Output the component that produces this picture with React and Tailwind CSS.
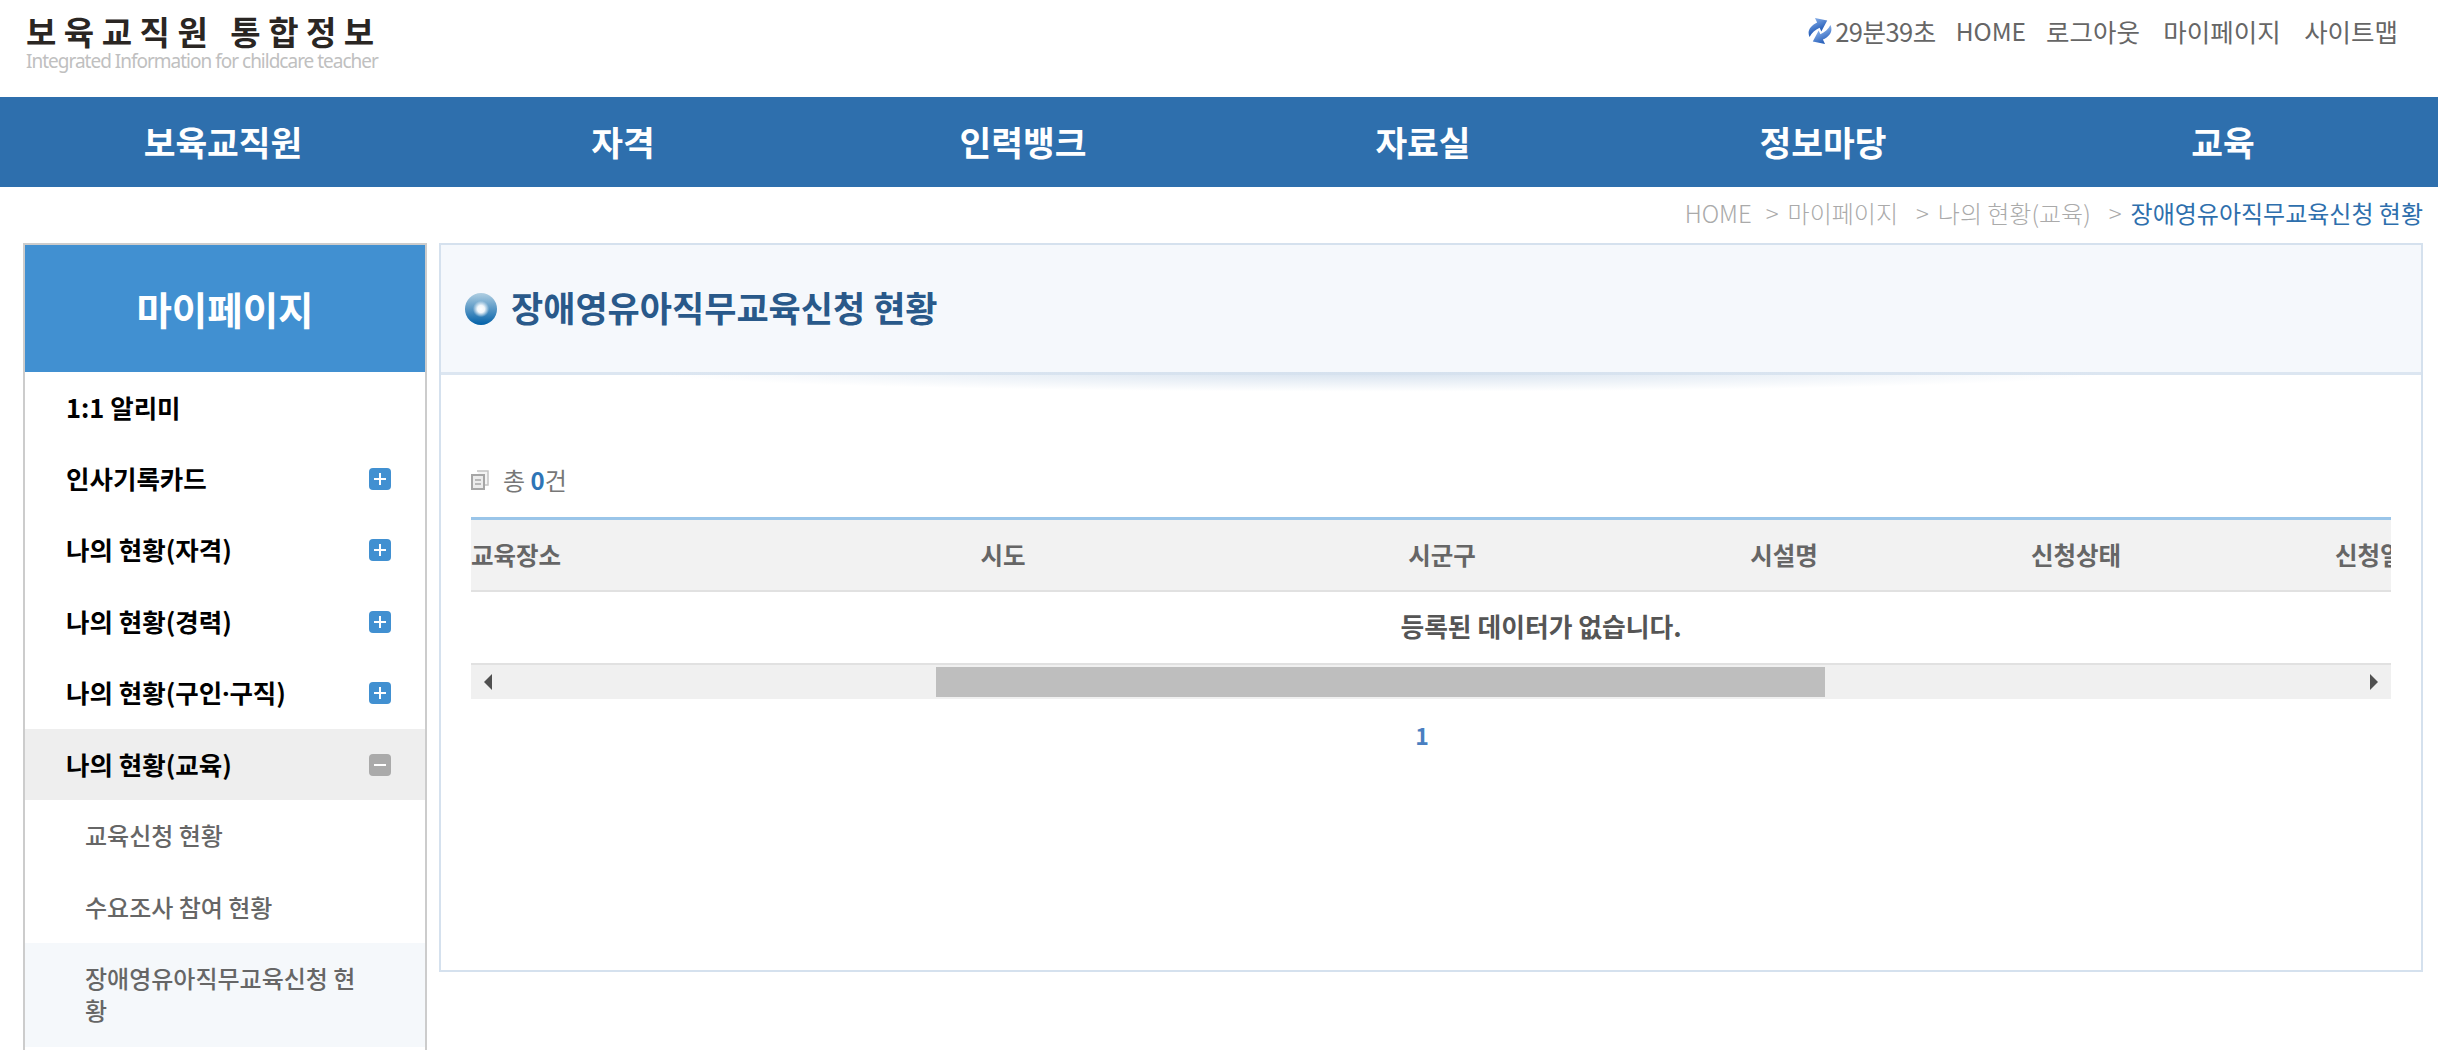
const navItems = ['보육교직원', '자격', '인력뱅크', '자료실', '정보마당', '교육'];

const sideItems = [
  { id: 'alarm', label: '1:1 알리미' },
  { id: 'card', label: '인사기록카드', icon: 'plus' },
  { id: 'cert', label: '나의 현황(자격)', icon: 'plus' },
  { id: 'career', label: '나의 현황(경력)', icon: 'plus' },
  {
    id: 'job',
    label: (
      <>
        나의 현황(구인<span className='font-["Noto_Sans",sans-serif]'>·</span>구직)
      </>
    ),
    icon: 'plus',
  },
  { id: 'edu', label: '나의 현황(교육)', icon: 'minus', open: true },
];

const columns = [
  { label: '교육장소', width: 'w-[476px]' },
  { label: '시도', width: 'w-[498px]' },
  { label: '시군구', width: 'w-[380px]' },
  { label: '시설명', width: 'w-[304px]' },
  { label: '신청상태', width: 'w-[280px]' },
  { label: '신청일자', width: 'w-[328px]' },
];

function RefreshIcon() {
  return (
    <svg width="26" height="28" viewBox="0 0 26 28" className="shrink-0">
      <defs>
        <linearGradient id="swirl" x1="0" y1="0" x2="0" y2="1">
          <stop offset="0" stopColor="#86aee8" />
          <stop offset="1" stopColor="#1c56b4" />
        </linearGradient>
      </defs>
      <g transform="rotate(-25 13 14)">
        <path d="M1 15C1 8 7 5 14 5V0l10 7.5L14 15v-4C9 11 5 12 1 15z" fill="url(#swirl)" />
        <path d="M25 13c0 7-6 10-13 10v5L2 20.500 12 13v4c5 0 9-1 13-4z" fill="url(#swirl)" />
      </g>
    </svg>
  );
}

function DocIcon() {
  return (
    <svg width="18" height="20" viewBox="0 0 18 20" className="shrink-0">
      <path d="M6 1h11v14h-3" fill="#f4f4f4" stroke="#c4c4c4" strokeWidth="1.5" />
      <rect x="1" y="5" width="12" height="14" fill="#ececec" stroke="#a6a6a6" strokeWidth="2" />
      <path d="M4 10h6M4 14h6" stroke="#a6a6a6" strokeWidth="1.500" />
    </svg>
  );
}

function ToggleIcon({ type }) {
  const bg = type === 'plus' ? 'bg-[#4190d1]' : 'bg-[#aaaaaa]';
  return (
    <span className={`relative flex h-[22px] w-[22px] items-center justify-center rounded-[4px] ${bg}`}>
      <span className="h-[2px] w-[12px] bg-white" />
      {type === 'plus' && <span className="absolute h-[12px] w-[2px] bg-white" />}
    </span>
  );
}

function Sidebar() {
  return (
    <aside className="h-[900px] w-[404px] shrink-0 border-2 border-[#cccccc] bg-white">
      <div className="flex h-[127px] items-center justify-center bg-[#4190d1] text-[38.5px] font-semibold text-white">
        마이페이지
      </div>
      {sideItems.map((item) => (
        <div
          key={item.id}
          className={`flex h-[71.4px] items-center justify-between pl-[41px] pr-[34px] text-[25.5px] font-bold text-black ${item.open ? 'bg-[#eeeeee]' : ''}`}
        >
          <span className="-mt-[2px]">{item.label}</span>
          {item.icon && <ToggleIcon type={item.icon} />}
        </div>
      ))}
      <div className="flex h-[71.5px] items-center pb-[2px] pl-[60px] text-[24px] font-medium text-[#666666]">교육신청 현황</div>
      <div className="flex h-[71.5px] items-center pb-[2px] pl-[60px] text-[24px] font-medium text-[#666666]">수요조사 참여 현황</div>
      <div className="flex h-[104px] items-center bg-[#f5f8fb] pb-[2px] pl-[60px] pr-[50px] text-[24px] font-medium leading-[32px] text-[#666666]">
        장애영유아직무교육신청 현황
      </div>
    </aside>
  );
}

function DataTable() {
  return (
    <div className="overflow-hidden border-t-[3px] border-[#9ac5e9]">
      <div className="-ml-[193px] w-[2526px]">
        <div className="flex h-[72px] items-center border-b-2 border-[#e1e1e1] bg-[#f2f2f2] text-[24.5px] font-bold text-[#666666]">
          {columns.map((col) => (
            <div key={col.label} className={`${col.width} shrink-0 text-center`}>
              {col.label}
            </div>
          ))}
        </div>
        <div className="flex h-[73px] items-center justify-center border-b-2 border-[#e1e1e1] pb-[2px] text-[25.8px] font-bold text-[#555555]">
          등록된 데이터가 없습니다.
        </div>
      </div>
    </div>
  );
}

function ScrollBar() {
  return (
    <div className="flex h-[34px] items-center bg-[#f0f0f0] pl-[13px] pr-[13px]">
      <span className="h-0 w-0 border-y-[8px] border-r-[8px] border-y-transparent border-r-[#505050]" />
      <div className="ml-[444px] mr-[545px] h-[30px] flex-1 bg-[#bebebe]" />
      <span className="h-0 w-0 border-y-[8px] border-l-[8px] border-y-transparent border-l-[#505050]" />
    </div>
  );
}

export default function App() {
  return (
    <div className='h-screen overflow-hidden bg-white font-["Noto_Sans_CJK_KR",sans-serif]'>
      {/* top bar */}
      <header className="flex h-[97px] justify-between pl-[26px] pr-[40px]">
        <div className="pt-[12px]">
          <div className="text-[33px] font-bold leading-[38px] tracking-[7.5px] text-[#2a2623]">보육교직원 통합정보</div>
          <div className='font-["Noto_Sans",sans-serif] text-[19px] leading-[22px] tracking-[-1px] text-[#c0c0c0]'>
            Integrated Information for childcare teacher
          </div>
        </div>
        <div className="flex h-[62px] items-center text-[25.5px] text-[#666666]">
          <RefreshIcon />
          <span className="ml-[2px] mr-[20px] tracking-[-0.5px]">29분39초</span>
          <span className="mr-[20px] text-[24.5px]">HOME</span>
          <span className="mr-[23.5px]">로그아웃</span>
          <span className="mr-[23.5px]">마이페이지</span>
          <span>사이트맵</span>
        </div>
      </header>

      {/* main nav */}
      <nav className="grid h-[90px] grid-cols-6 items-center bg-[#2e6fad] pl-[23px] pr-[15px] text-[34.5px] font-bold text-white">
        {navItems.map((item) => (
          <div key={item} className="text-center">
            {item}
          </div>
        ))}
      </nav>

      {/* breadcrumb */}
      <div className="flex h-[56px] items-center justify-end gap-[18px] pb-[4px] pr-[15px] text-[24px] font-light text-[#aaaaaa]">
        <span className="-mr-[4px]">HOME</span>
        <span>
          <span className="mr-[9px]">&gt;</span>마이페이지
        </span>
        <span>
          <span className="mr-[9px]">&gt;</span>나의 현황(교육)
        </span>
        <span>
          <span className="mr-[9px]">&gt;</span>
          <span className="font-normal text-[#2e6fad]">장애영유아직무교육신청 현황</span>
        </span>
      </div>

      <div className="flex gap-[12px] pl-[23px] pr-[15px]">
        <Sidebar />

        <main className="h-[729px] min-w-0 flex-1 border-2 border-[#d5e1ee]">
          <div className="relative flex h-[130px] items-center gap-[14px] border-b-[3px] border-[#dce6f1] bg-[#f5f8fc] pl-[24px]">
            <span className="h-[32px] w-[32px] rounded-full bg-[radial-gradient(circle_at_50%_50%,#ffffff_0,#f0f6fa_16%,transparent_36%),linear-gradient(#b0cfe2,#0060a8)]" />
            <h2 className="-mt-[2px] text-[35px] font-bold text-[#29598a]">장애영유아직무교육신청 현황</h2>
            <span className="absolute left-[200px] right-[300px] top-full h-[20px] bg-[radial-gradient(ellipse_at_50%_0%,#d5e1ee_0,transparent_70%)]" />
          </div>

          <div className="px-[30px]">
            <div className="flex h-[142px] items-center gap-[14px] pb-[2px] pt-[70px] text-[24px] text-[#777777]">
              <DocIcon />
              <span>
                총 <b className="text-[#2e75b6]">0</b>건
              </span>
            </div>
            <DataTable />
            <ScrollBar />
            <div className="mt-[19px] pr-[18px] text-center text-[23px] font-bold text-[#4a7fc1]">1</div>
          </div>
        </main>
      </div>
    </div>
  );
}
